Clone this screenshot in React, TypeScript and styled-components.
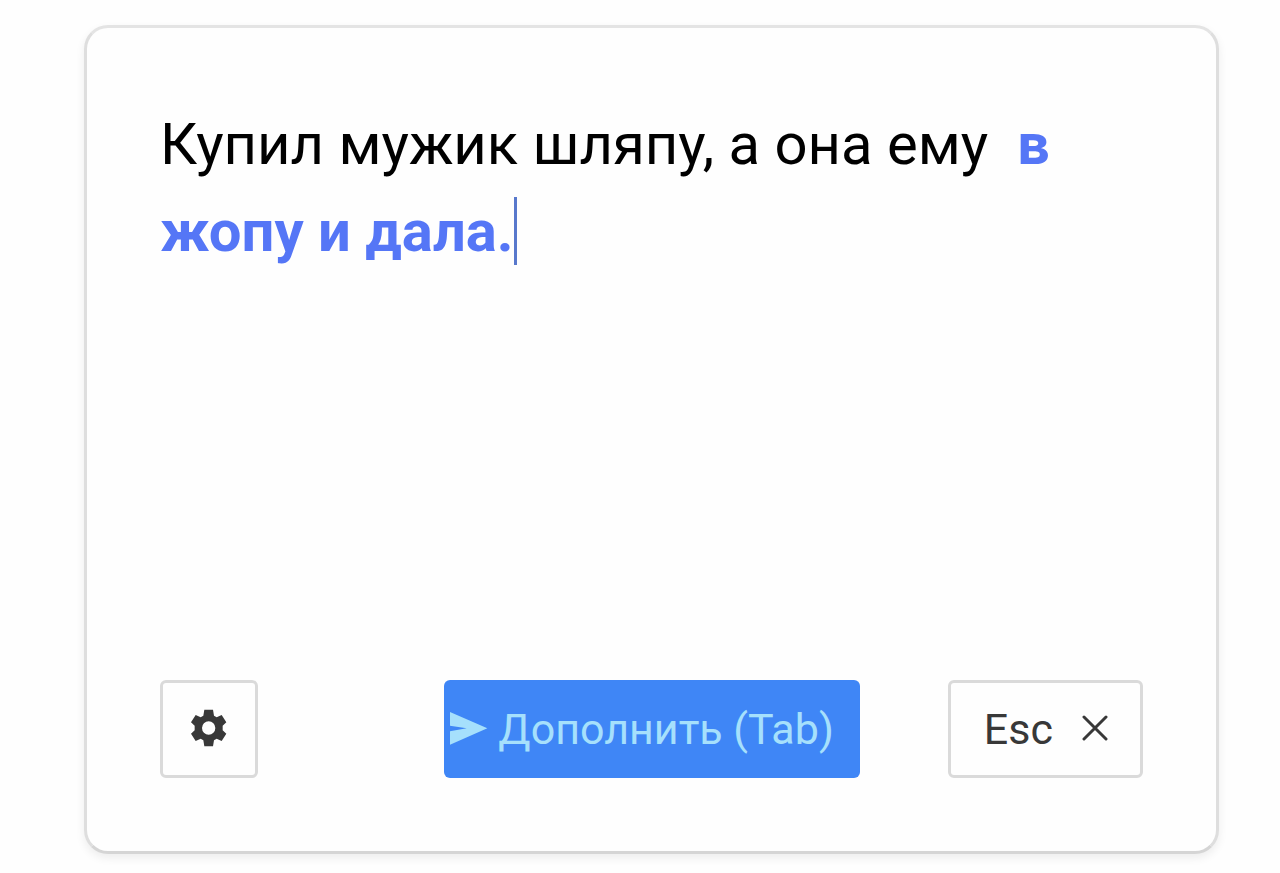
import React from "react";
import styled, { createGlobalStyle } from "styled-components";

const GlobalStyle = createGlobalStyle`
  * { box-sizing: border-box; }
  body { margin: 0; background: #fefefe; font-family: Roboto, sans-serif; }
`;

const Page = styled.main`
  padding: 25px 61px 20px 84px;
`;

const Card = styled.section`
  display: flex;
  flex-direction: column;
  min-height: 829px;
  padding: 73px;
  border: 3px solid #dedede;
  border-top-color: #e4e4e4;
  border-bottom-color: #d5d5d5;
  border-radius: 24px;
  background: #fefefe;
  box-shadow: 0 4px 10px rgba(0, 0, 0, 0.07);
`;

const Editor = styled.div`
  flex: 1;
  outline: none;
  font-size: 58px;
  line-height: 87px;
  color: #000;
`;

const Suggestion = styled.strong`
  font-weight: 700;
  color: #5576f6;
`;

const Caret = styled.span`
  display: inline-block;
  width: 3px;
  height: 68px;
  vertical-align: -14px;
  background: #5878cc;
`;

const Toolbar = styled.footer`
  display: flex;
  align-items: center;
  gap: 88px;
`;

const Button = styled.button`
  display: flex;
  align-items: center;
  justify-content: center;
  gap: 28px;
  height: 98px;
  padding: 0 31px 0 33px;
  border: 3px solid #dadada;
  border-radius: 6px;
  background: #fefefe;
  color: #383838;
  font-family: inherit;
  font-size: 43px;
  line-height: 52px;
  white-space: nowrap;
  cursor: pointer;
`;

const IconButton = styled(Button)`
  width: 98px;
  margin-right: auto;
  padding: 0;
`;

const PrimaryButton = styled(Button)`
  gap: 10px;
  padding: 0 26px 0 6px;
  border: 0;
  background: #3f86f6;
  color: #a6e0fc;
`;

export default function App() {
  return (
    <>
      <GlobalStyle />
      <Page>
        <Card>
          <Editor role="textbox" aria-multiline="true" aria-label="Текст" tabIndex={0}>
            Купил мужик шляпу, а она ему&nbsp; <Suggestion>в жопу и дала.</Suggestion>
            <Caret />
          </Editor>
          <Toolbar>
            <IconButton type="button" aria-label="Настройки">
              <svg width="44" height="44" viewBox="-65 -63 132 132" fill="currentColor" aria-hidden="true">
                <path
                  fillRule="evenodd"
                  d="M-13-55H13L16-37 24-32 39-39 53-17 42-7V7L53 17 39 39 24 32 16 37 13 55H-13L-16 37-24 32-39 39-53 17-42 7V-7L-53-17-39-39-24-32-16-37ZM0-20A20 20 0 1 0 0 20 20 20 0 1 0 0-20Z"
                />
              </svg>
            </IconButton>
            <PrimaryButton type="button">
              <svg width="38" height="34" viewBox="0 0 114 102" fill="currentColor" aria-hidden="true">
                <path d="M0 0 112 49 0 98V58L50 49 0 41Z" />
              </svg>
              Дополнить (Tab)
            </PrimaryButton>
            <Button type="button">
              Esc
              <svg width="28" height="28" viewBox="0 0 28 28" fill="none" stroke="currentColor" strokeWidth="3" strokeLinecap="round" aria-hidden="true">
                <path d="M3 2 25 24M25 2 3 24" />
              </svg>
            </Button>
          </Toolbar>
        </Card>
      </Page>
    </>
  );
}
